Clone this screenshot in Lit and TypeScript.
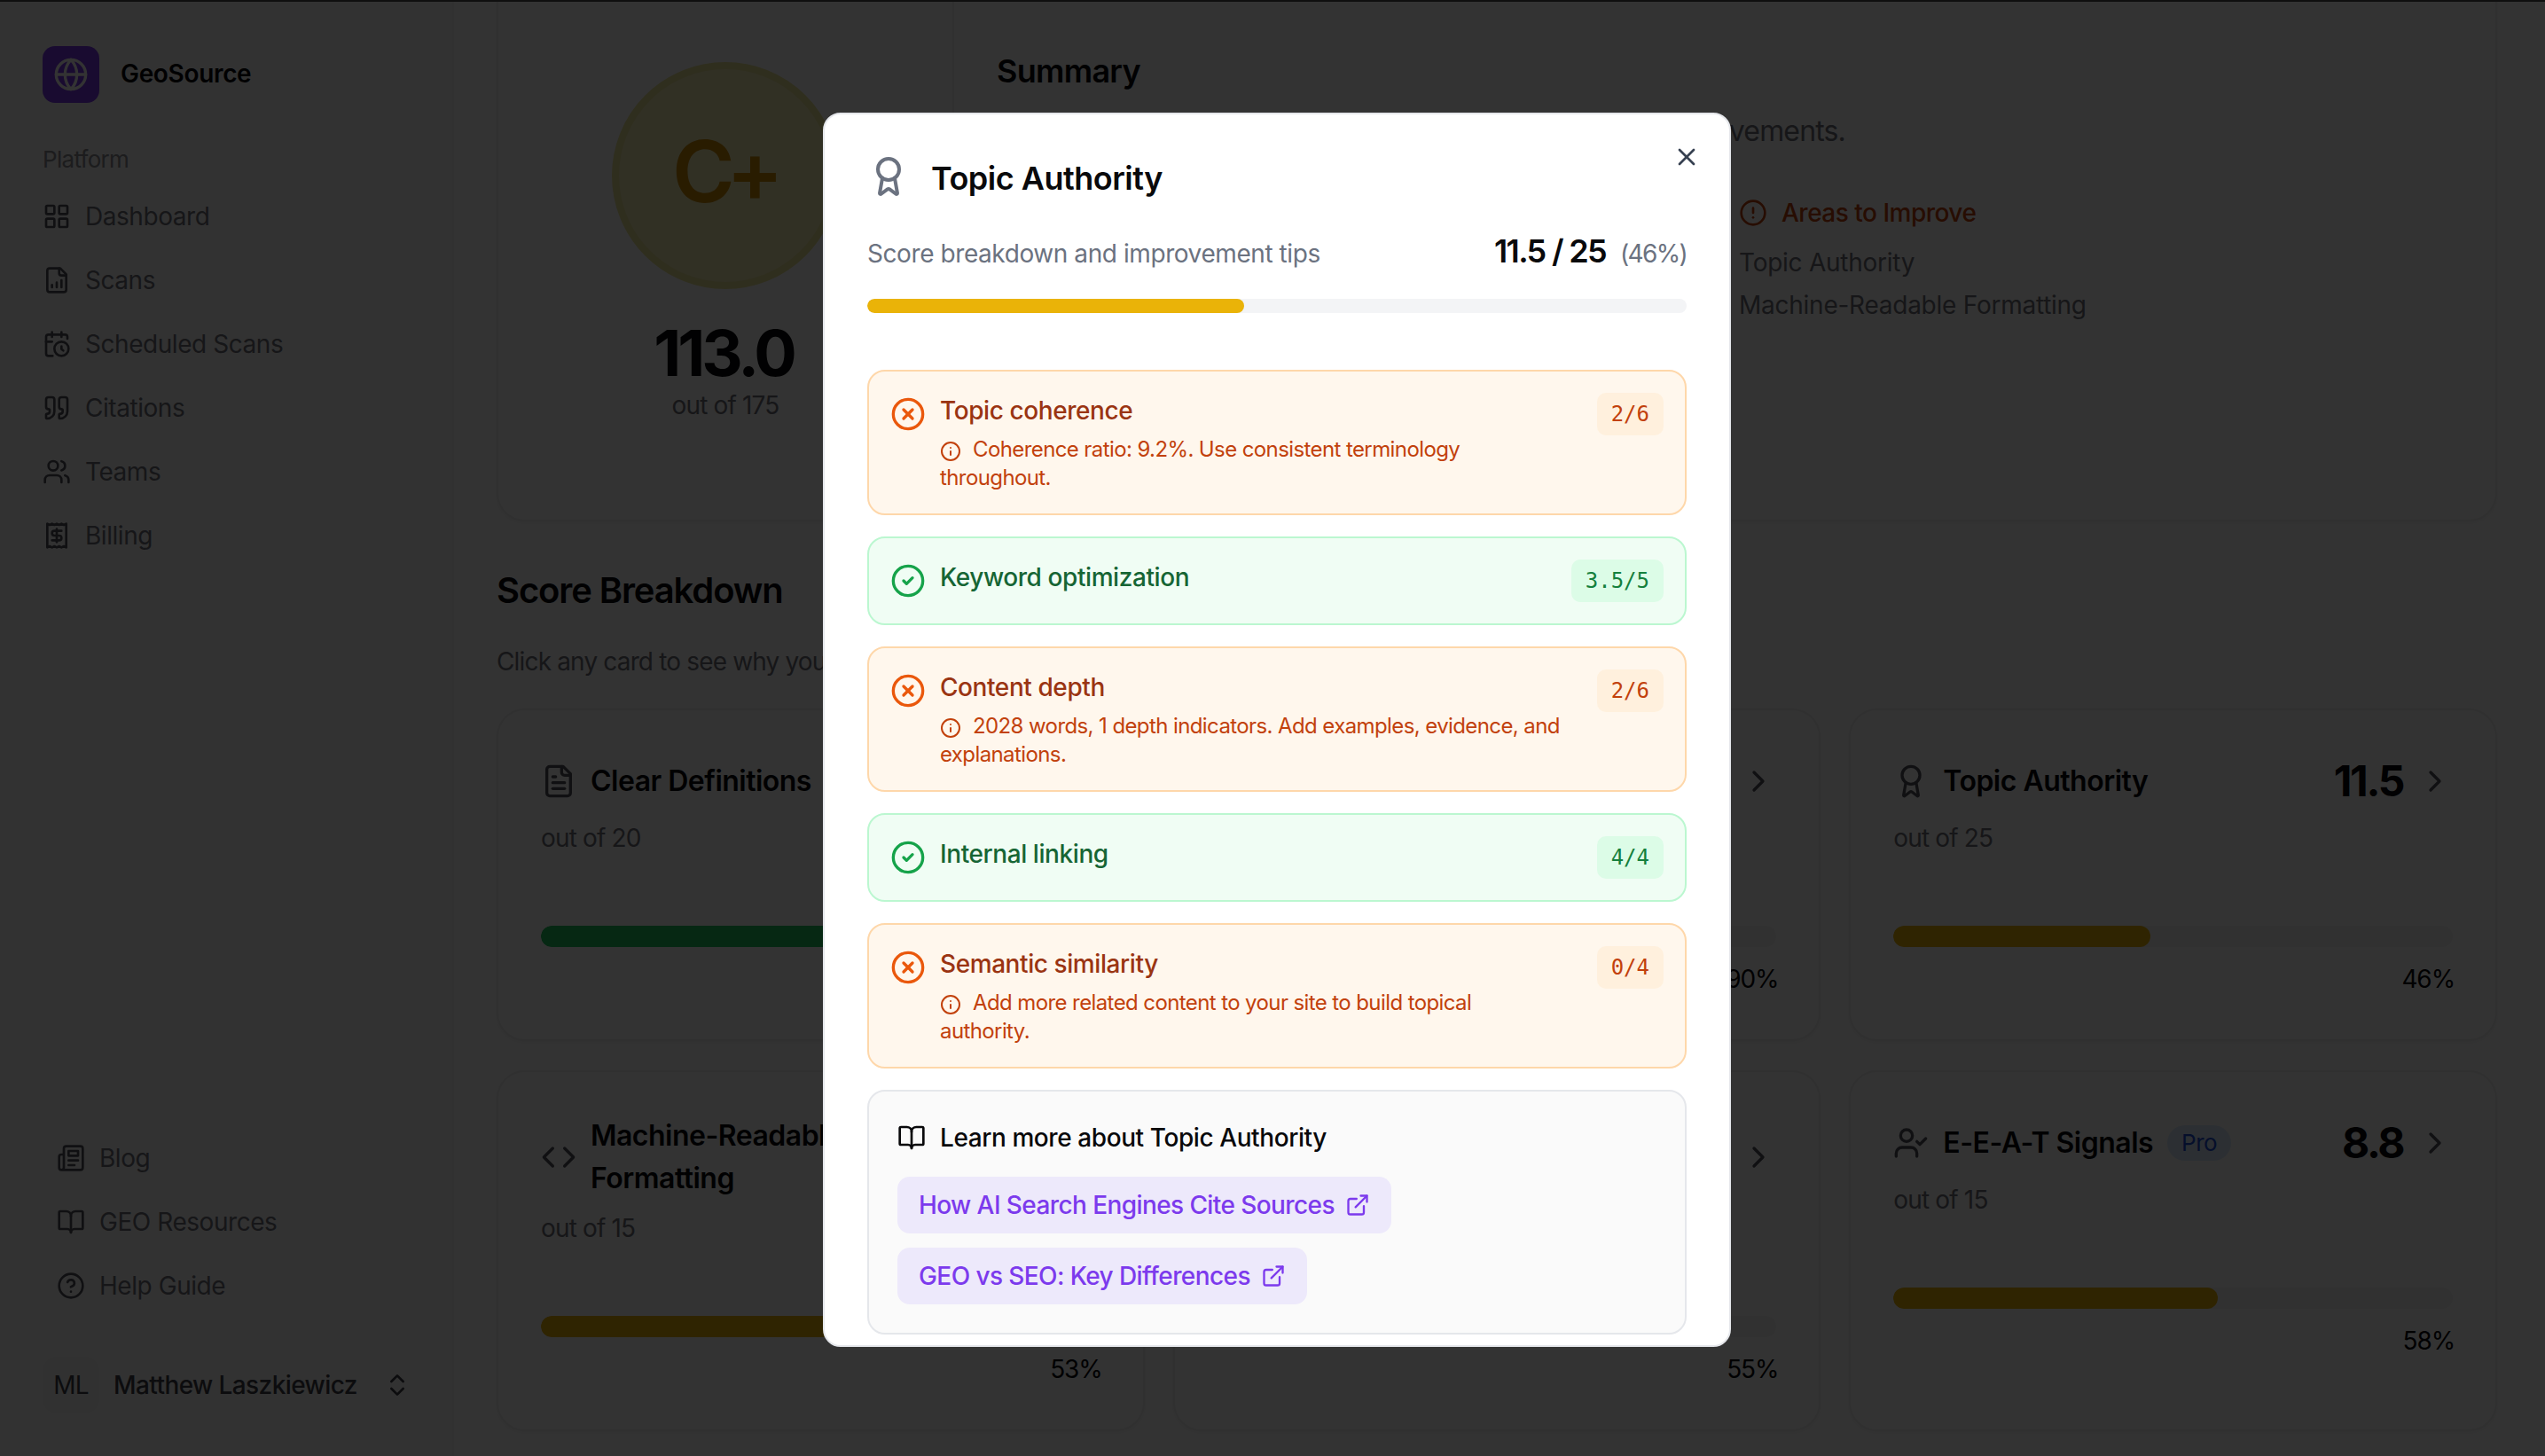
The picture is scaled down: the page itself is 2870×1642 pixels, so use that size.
import { LitElement, html, css, svg } from 'lit';
import { customElement } from 'lit/decorators.js';

const ICONS = {
  grid: svg`<rect x="3" y="3" width="7" height="7" rx="1"/><rect x="14" y="3" width="7" height="7" rx="1"/><rect x="14" y="14" width="7" height="7" rx="1"/><rect x="3" y="14" width="7" height="7" rx="1"/>`,
  fileChart: svg`<path d="M15 2H6a2 2 0 0 0-2 2v16a2 2 0 0 0 2 2h12a2 2 0 0 0 2-2V7Z"/><path d="M14 2v4a2 2 0 0 0 2 2h4"/><path d="M8 18v-2"/><path d="M12 18v-4"/><path d="M16 18v-6"/>`,
  calendarClock: svg`<path d="M21 7.5V6a2 2 0 0 0-2-2H5a2 2 0 0 0-2 2v14a2 2 0 0 0 2 2h3.5"/><path d="M16 2v4"/><path d="M8 2v4"/><path d="M3 10h5"/><path d="M17.5 17.5 16 16.3V14"/><circle cx="16" cy="16" r="6"/>`,
  quote: svg`<path d="M16 3a2 2 0 0 0-2 2v6a2 2 0 0 0 2 2 1 1 0 0 1 1 1v1a2 2 0 0 1-2 2 1 1 0 0 0-1 1v2a1 1 0 0 0 1 1 6 6 0 0 0 6-6V5a2 2 0 0 0-2-2z"/><path d="M5 3a2 2 0 0 0-2 2v6a2 2 0 0 0 2 2 1 1 0 0 1 1 1v1a2 2 0 0 1-2 2 1 1 0 0 0-1 1v2a1 1 0 0 0 1 1 6 6 0 0 0 6-6V5a2 2 0 0 0-2-2z"/>`,
  users: svg`<path d="M16 21v-2a4 4 0 0 0-4-4H6a4 4 0 0 0-4 4v2"/><path d="M16 3.128a4 4 0 0 1 0 7.744"/><path d="M22 21v-2a4 4 0 0 0-3-3.87"/><circle cx="9" cy="7" r="4"/>`,
  receipt: svg`<path d="M4 2v20l2-1 2 1 2-1 2 1 2-1 2 1 2-1 2 1V2l-2 1-2-1-2 1-2-1-2 1-2-1-2 1Z"/><path d="M16 8h-6a2 2 0 1 0 0 4h4a2 2 0 1 1 0 4H8"/><path d="M12 17.5v-11"/>`,
  newspaper: svg`<path d="M4 22h16a2 2 0 0 0 2-2V4a2 2 0 0 0-2-2H8a2 2 0 0 0-2 2v16a2 2 0 0 1-2 2Zm0 0a2 2 0 0 1-2-2v-9c0-1.1.9-2 2-2h2"/><path d="M18 14h-8"/><path d="M15 18h-5"/><path d="M10 6h8v4h-8V6Z"/>`,
  book: svg`<path d="M12 7v14"/><path d="M3 18a1 1 0 0 1-1-1V4a1 1 0 0 1 1-1h5a4 4 0 0 1 4 4 4 4 0 0 1 4-4h5a1 1 0 0 1 1 1v13a1 1 0 0 1-1 1h-6a3 3 0 0 0-3 3 3 3 0 0 0-3-3z"/>`,
  help: svg`<circle cx="12" cy="12" r="10"/><path d="M9.09 9a3 3 0 0 1 5.83 1c0 2-3 3-3 3"/><path d="M12 17h.01"/>`,
  updown: svg`<path d="m7 15 5 5 5-5"/><path d="m7 9 5-5 5 5"/>`,
  globe: svg`<circle cx="12" cy="12" r="10"/><path d="M12 2a14.5 14.5 0 0 0 0 20 14.5 14.5 0 0 0 0-20"/><path d="M2 12h20"/>`,
  award: svg`<path d="m15.477 12.89 1.515 8.526a.5.5 0 0 1-.81.47l-3.58-2.687a1 1 0 0 0-1.197 0l-3.586 2.686a.5.5 0 0 1-.81-.469l1.514-8.526"/><circle cx="12" cy="8" r="6"/>`,
  x: svg`<path d="M18 6 6 18"/><path d="m6 6 12 12"/>`,
  circleX: svg`<circle cx="12" cy="12" r="10"/><path d="m15 9-6 6"/><path d="m9 9 6 6"/>`,
  circleCheck: svg`<circle cx="12" cy="12" r="10"/><path d="m9 12 2 2 4-4"/>`,
  info: svg`<circle cx="12" cy="12" r="10"/><path d="M12 16v-4"/><path d="M12 8h.01"/>`,
  alert: svg`<circle cx="12" cy="12" r="10"/><path d="M12 8v4"/><path d="M12 16h.01"/>`,
  external: svg`<path d="M15 3h6v6"/><path d="M10 14 21 3"/><path d="M18 13v6a2 2 0 0 1-2 2H5a2 2 0 0 1-2-2V8a2 2 0 0 1 2-2h6"/>`,
  fileText: svg`<path d="M15 2H6a2 2 0 0 0-2 2v16a2 2 0 0 0 2 2h12a2 2 0 0 0 2-2V7Z"/><path d="M14 2v4a2 2 0 0 0 2 2h4"/><path d="M10 9H8"/><path d="M16 13H8"/><path d="M16 17H8"/>`,
  code: svg`<path d="m16 18 6-6-6-6"/><path d="m8 6-6 6 6 6"/>`,
  userCheck: svg`<path d="M16 21v-2a4 4 0 0 0-4-4H6a4 4 0 0 0-4 4v2"/><circle cx="9" cy="7" r="4"/><path d="m16 11 2 2 4-4"/>`,
  chevron: svg`<path d="m9 18 6-6-6-6"/>`,
};

type IconName = keyof typeof ICONS;

const icon = (name: IconName, size = 32) =>
  html`<svg class="ic" width=${size} height=${size} viewBox="0 0 24 24" fill="none" stroke="currentColor"
    stroke-width="2" stroke-linecap="round" stroke-linejoin="round">${ICONS[name]}</svg>`;

const NAV: [IconName, string][] = [
  ['grid', 'Dashboard'],
  ['fileChart', 'Scans'],
  ['calendarClock', 'Scheduled Scans'],
  ['quote', 'Citations'],
  ['users', 'Teams'],
  ['receipt', 'Billing'],
];

const FOOT_NAV: [IconName, string][] = [
  ['newspaper', 'Blog'],
  ['book', 'GEO Resources'],
  ['help', 'Help Guide'],
];

interface ScoreCard {
  icon: IconName;
  title: string;
  score: string;
  max: number;
  pct: number;
  color: string;
  pro?: boolean;
}

const GREEN = '#22c55e';
const YELLOW = '#eab308';

const CARDS: ScoreCard[] = [
  { icon: 'fileText', title: 'Clear Definitions', score: '18.0', max: 20, pct: 90, color: GREEN },
  { icon: 'fileText', title: 'Direct Answers', score: '18.0', max: 20, pct: 90, color: GREEN },
  { icon: 'award', title: 'Topic Authority', score: '11.5', max: 25, pct: 46, color: YELLOW },
  { icon: 'code', title: 'Machine-Readable Formatting', score: '8.0', max: 15, pct: 53, color: YELLOW },
  { icon: 'code', title: 'Structured Content Hierarchy', score: '8.3', max: 15, pct: 55, color: YELLOW },
  { icon: 'userCheck', title: 'E-E-A-T Signals', score: '8.8', max: 15, pct: 58, color: YELLOW, pro: true },
];

interface Check {
  title: string;
  score: string;
  ok: boolean;
  detail?: string;
}

const CHECKS: Check[] = [
  { title: 'Topic coherence', score: '2/6', ok: false, detail: 'Coherence ratio: 9.2%. Use consistent terminology throughout.' },
  { title: 'Keyword optimization', score: '3.5/5', ok: true },
  { title: 'Content depth', score: '2/6', ok: false, detail: '2028 words, 1 depth indicators. Add examples, evidence, and explanations.' },
  { title: 'Internal linking', score: '4/4', ok: true },
  { title: 'Semantic similarity', score: '0/4', ok: false, detail: 'Add more related content to your site to build topical authority.' },
];

@customElement('app-root')
export class AppRoot extends LitElement {
  static styles = css`
    :host {
      display: block;
      width: 2870px;
      height: 1642px;
      overflow: hidden;
      background: #fff;
      font-family: Inter, 'Liberation Sans', sans-serif;
      font-size: 28px;
      line-height: 40px;
      letter-spacing: -0.03em;
      color: #09090b;
    }

    * { box-sizing: border-box; }
    .ic { display: block; flex: none; }

    .topline { height: 2px; background: #4a4a4a; }

    .layout {
      display: grid;
      grid-template-columns: 512px 1fr;
      height: 1640px;
      overflow: hidden;
    }

    .sidebar {
      display: flex;
      flex-direction: column;
      padding: 50px 0 48px 48px;
      background: #fafafa;
      border-right: 2px solid #f2f2f3;
    }

    .brand { display: flex; align-items: center; gap: 24px; font-size: 28px; font-weight: 600; letter-spacing: -0.012em; }
    .brand span { padding-bottom: 2px; }
    .logo {
      width: 64px;
      height: 64px;
      display: flex;
      align-items: center;
      justify-content: center;
      border-radius: 14px;
      background: #7c3aed;
      color: #fff;
    }

    .group-label { margin: 48px 0 12px; font-size: 26px; line-height: 32px; color: #8a8a93; letter-spacing: -0.027em; }
    .nav-item { display: flex; align-items: center; gap: 16px; height: 72px; color: #71717a; letter-spacing: -0.016em; }
    .nav-item .ic { color: #52525b; }
    .spacer { flex: 1; }
    .foot-nav { padding-left: 16px; }

    .user { display: flex; align-items: center; margin-top: 44px; color: #3f3f46; }
    .avatar {
      width: 64px;
      height: 64px;
      display: flex;
      align-items: center;
      justify-content: center;
      border-radius: 16px;
      background: #f4f4f5;
    }
    .user-name { margin-left: 16px; width: 304px; font-weight: 500; letter-spacing: -0.021em; }

    main { padding: 0 54px 0 48px; min-width: 0; }

    .panel {
      background: #fff;
      border: 2px solid #eeeeef;
      border-radius: 32px;
      box-shadow: 0 2px 4px rgba(0, 0, 0, 0.05);
    }

    .summary {
      display: grid;
      grid-template-columns: 514px 1fr;
      height: 628px;
      margin-top: -42px;
    }

    .grade-col {
      display: flex;
      flex-direction: column;
      align-items: center;
      padding-top: 108px;
      border-right: 2px solid #eeeeef;
    }
    .grade {
      width: 256px;
      height: 256px;
      display: flex;
      align-items: center;
      justify-content: center;
      padding: 0 4px 10px 0;
      border-radius: 50%;
      background: #f3edb4;
      border: 8px solid #ebe496;
      font-size: 96px;
      font-weight: 600;
      color: #ca8a04;
      letter-spacing: -0.1em;
    }
    .total { margin: 32px 4px 0 0; font-size: 72px; line-height: 80px; font-weight: 700; letter-spacing: -0.055em; }
    .muted { color: #71717a; }
    .total + .muted { margin-top: -1px; }

    .summary-col { padding: 94px 0 0 48px; }
    .summary-title { font-size: 36px; line-height: 48px; font-weight: 600; letter-spacing: -0.02em; }
    .summary-text {
      margin-top: 20px;
      width: 957px;
      font-size: 32px;
      line-height: 48px;
      text-align: right;
      white-space: nowrap;
      color: #71717a;
    }
    .improve { margin: 48px 0 0 837px; }
    .improve-head { display: flex; align-items: center; gap: 16px; color: #c2410c; font-weight: 500; letter-spacing: -0.018em; }
    .improve-item { line-height: 48px; color: #71717a; letter-spacing: -0.009em; }
    .improve-item.first { margin-top: 12px; }

    .section-title { margin-top: 50px; font-size: 40px; line-height: 56px; font-weight: 600; letter-spacing: -0.028em; }
    .section-sub { margin-top: 32px; color: #71717a; }

    .cards {
      display: grid;
      grid-template-columns: repeat(3, 1fr);
      gap: 33px 32px;
      margin-top: 33px;
    }
    .card { padding: 48px; border-radius: 32px; }
    .card-head { display: flex; align-items: center; justify-content: space-between; }
    .card-name { display: flex; align-items: center; gap: 16px; }
    .card-name .ic { color: #52525b; }
    .card-title { max-width: 400px; font-size: 32px; line-height: 48px; font-weight: 600; letter-spacing: -0.016em; }
    .pro {
      padding: 0 16px;
      border-radius: 20px;
      background: #dbeafe;
      color: #1d4ed8;
      font-size: 26px;
      line-height: 40px;
      font-weight: 400;
      letter-spacing: -0.02em;
    }
    .card-score { display: flex; align-items: center; gap: 16px; }
    .score-num { font-size: 48px; line-height: 64px; font-weight: 700; letter-spacing: -0.05em; }
    .card-score .ic { color: #52525b; }
    .out-of { margin-top: 12px; }
    .track { height: 24px; margin-top: 79px; border-radius: 12px; background: #f4f4f5; overflow: hidden; }
    .fill { height: 100%; border-radius: 12px; }
    .pct { margin: 16px -2px 0 0; text-align: right; letter-spacing: -0.04em; }

    .overlay {
      position: fixed;
      inset: 0;
      display: flex;
      align-items: center;
      justify-content: center;
      padding: 3px 0 0 10px;
      background: rgba(0, 0, 0, 0.8);
    }

    .modal {
      position: relative;
      width: 1024px;
      height: 1392px;
      padding: 46px 48px 0;
      overflow: hidden;
      background: #fff;
      border: 2px solid #e5e7eb;
      border-radius: 20px;
    }
    .close { position: absolute; top: 32px; right: 32px; color: #374151; }
    .modal-head { display: flex; align-items: center; gap: 24px; height: 48px; }
    .modal-head .ic { color: #6b7280; }
    .modal-title { padding-top: 4px; font-size: 36px; line-height: 48px; font-weight: 600; letter-spacing: -0.014em; }
    .modal-sub {
      display: flex;
      align-items: baseline;
      justify-content: space-between;
      margin-top: 40px;
      color: #6b7280;
      letter-spacing: -0.015em;
    }
    .modal-score { display: flex; align-items: baseline; gap: 16px; letter-spacing: -0.06em; }
    .modal-score b { font-size: 36px; font-weight: 600; color: #09090b; }
    .modal-track { height: 16px; margin-top: 31px; border-radius: 8px; background: #f3f4f6; overflow: hidden; }
    .modal-fill { height: 100%; border-radius: 8px; background: #eab308; }

    .checks { display: flex; flex-direction: column; gap: 24px; margin-top: 64px; }
    .check {
      display: flex;
      align-items: flex-start;
      justify-content: space-between;
      gap: 16px;
      padding: 24px;
      border: 2px solid;
      border-radius: 20px;
    }
    .check.bad { background: #fff7ed; border-color: #fed7aa; }
    .check.good { background: #f0fdf4; border-color: #bbf7d0; }
    .check-main { display: flex; gap: 16px; flex: 1; min-width: 0; }
    .check-icon { margin-top: 4px; }
    .bad .check-icon { color: #ea580c; }
    .good .check-icon { color: #16a34a; }
    .check-title { font-size: 28px; line-height: 40px; font-weight: 500; letter-spacing: -0.015em; }
    .bad .check-title { color: #9a3412; }
    .good .check-title { color: #166534; }
    .check-detail { margin-top: 8px; max-width: 704px; font-size: 24px; line-height: 32px; letter-spacing: -0.025em; color: #c2410c; }
    .check-detail .ic { display: inline-block; vertical-align: -6px; margin-right: 13px; }
    .badge {
      padding: 0 16px;
      border-radius: 10px;
      font-family: 'DejaVu Sans Mono', monospace;
      font-size: 24px;
      line-height: 48px;
      letter-spacing: 0;
    }
    .bad .badge { background: #ffedd5aa; color: #c2410c; }
    .good .badge { background: #dcfce7; color: #15803d; }

    .learn {
      margin-top: 24px;
      padding: 32px;
      background: #fafafa;
      border: 2px solid #e5e7eb;
      border-radius: 20px;
    }
    .learn-head { display: flex; align-items: center; gap: 16px; font-weight: 500; letter-spacing: -0.015em; }
    .links { display: flex; flex-direction: column; align-items: flex-start; gap: 16px; margin-top: 24px; }
    .link {
      display: flex;
      align-items: center;
      gap: 12px;
      height: 64px;
      padding: 0 24px;
      border-radius: 14px;
      background: #ede9fb;
      color: #7c3aed;
      font-weight: 500;
      letter-spacing: -0.021em;
    }
  `;

  private renderCard(c: ScoreCard) {
    return html`
      <div class="panel card">
        <div class="card-head">
          <div class="card-name">
            ${icon(c.icon, 40)}
            <div class="card-title">${c.title}</div>
            ${c.pro ? html`<span class="pro">Pro</span>` : ''}
          </div>
          <div class="card-score">
            <span class="score-num">${c.score}</span>
            ${icon('chevron', 40)}
          </div>
        </div>
        <div class="out-of muted">out of ${c.max}</div>
        <div class="track"><div class="fill" style="width:${c.pct}%;background:${c.color}"></div></div>
        <div class="pct">${c.pct}%</div>
      </div>
    `;
  }

  private renderCheck(c: Check) {
    return html`
      <div class="check ${c.ok ? 'good' : 'bad'}">
        <div class="check-main">
          <div class="check-icon">${icon(c.ok ? 'circleCheck' : 'circleX', 40)}</div>
          <div>
            <div class="check-title">${c.title}</div>
            ${c.detail ? html`<div class="check-detail">${icon('info', 24)}${c.detail}</div>` : ''}
          </div>
        </div>
        <div class="badge">${c.score}</div>
      </div>
    `;
  }

  render() {
    return html`
      <div class="topline"></div>
      <div class="layout">
        <aside class="sidebar">
          <div class="brand">
            <div class="logo">${icon('globe', 40)}</div>
            <span>GeoSource</span>
          </div>
          <div class="group-label">Platform</div>
          ${NAV.map(([i, label]) => html`<div class="nav-item">${icon(i)}${label}</div>`)}
          <div class="spacer"></div>
          <div class="foot-nav">
            ${FOOT_NAV.map(([i, label]) => html`<div class="nav-item">${icon(i)}${label}</div>`)}
          </div>
          <div class="user">
            <div class="avatar">ML</div>
            <div class="user-name">Matthew Laszkiewicz</div>
            ${icon('updown')}
          </div>
        </aside>

        <main>
          <section class="panel summary">
            <div class="grade-col">
              <div class="grade">C+</div>
              <div class="total">113.0</div>
              <div class="muted">out of 175</div>
            </div>
            <div class="summary-col">
              <div class="summary-title">Summary</div>
              <div class="summary-text">Solid foundation with room for improvements.</div>
              <div class="improve">
                <div class="improve-head">${icon('alert')}Areas to Improve</div>
                <div class="improve-item first">Topic Authority</div>
                <div class="improve-item">Machine-Readable Formatting</div>
              </div>
            </div>
          </section>

          <div class="section-title">Score Breakdown</div>
          <div class="section-sub">Click any card to see why you got each score.</div>
          <div class="cards">${CARDS.map((c) => this.renderCard(c))}</div>
        </main>
      </div>

      <div class="overlay">
        <div class="modal">
          <div class="close">${icon('x')}</div>
          <div class="modal-head">
            ${icon('award', 48)}
            <div class="modal-title">Topic Authority</div>
          </div>
          <div class="modal-sub">
            <span>Score breakdown and improvement tips</span>
            <span class="modal-score"><b>11.5 / 25</b><span>(46%)</span></span>
          </div>
          <div class="modal-track"><div class="modal-fill" style="width:46%"></div></div>
          <div class="checks">${CHECKS.map((c) => this.renderCheck(c))}</div>
          <div class="learn">
            <div class="learn-head">${icon('book')}Learn more about Topic Authority</div>
            <div class="links">
              <div class="link">How AI Search Engines Cite Sources${icon('external', 28)}</div>
              <div class="link">GEO vs SEO: Key Differences${icon('external', 28)}</div>
            </div>
          </div>
        </div>
      </div>
    `;
  }
}
